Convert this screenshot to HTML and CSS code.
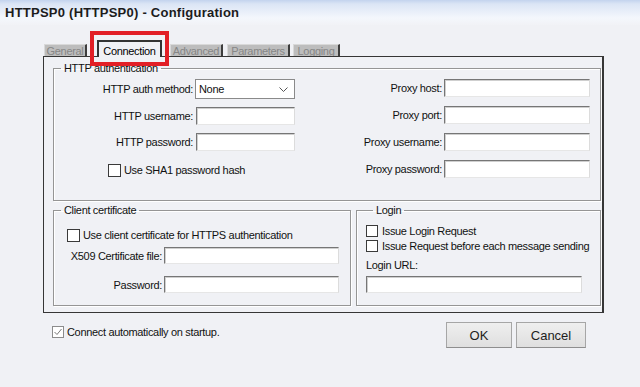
FILE: index.html
```html
<!DOCTYPE html>
<html>
<head>
<meta charset="utf-8">
<title>HTTPSP0 Configuration</title>
<link rel="stylesheet" href="styles.css">
</head>
<body>
<div class="titlebar">HTTPSP0 (HTTPSP0) - Configuration</div>

<div class="tabs">
  <div class="tabstrip">
    <div class="tab t-general">General</div>
    <div class="tab active">Connection<span class="highlight"></span></div>
    <div class="tab t-adv">Advanced</div>
    <div class="tab t-par">Parameters</div>
    <div class="tab t-log">Logging</div>
  </div>

  <div class="panel">
    <fieldset class="group http">
      <legend>HTTP authentication</legend>
      <div class="cols">
        <div class="form left">
          <label>HTTP auth method:</label>
          <div class="select"><span>None</span><svg width="9" height="5" viewBox="0 0 9 5"><polyline points="0.5,0.5 4.5,4.5 8.5,0.5" fill="none" stroke="#555" stroke-width="1"/></svg></div>
          <label>HTTP username:</label><div class="input"></div>
          <label>HTTP password:</label><div class="input"></div>
          <div class="check sha"><span class="box"></span>Use SHA1 password hash</div>
        </div>
        <div class="form right">
          <label>Proxy host:</label><div class="input"></div>
          <label>Proxy port:</label><div class="input"></div>
          <label>Proxy username:</label><div class="input"></div>
          <label>Proxy password:</label><div class="input"></div>
        </div>
      </div>
    </fieldset>

    <div class="row2">
      <fieldset class="group cert">
        <legend>Client certificate</legend>
        <div class="check"><span class="box"></span>Use client certificate for HTTPS authentication</div>
        <div class="form certform">
          <label>X509 Certificate file:</label><div class="input"></div>
          <label>Password:</label><div class="input"></div>
        </div>
      </fieldset>
      <fieldset class="group login">
        <legend>Login</legend>
        <div class="check"><span class="box"></span>Issue Login Request</div>
        <div class="check"><span class="box"></span>Issue Request before each message sending</div>
        <div class="urllabel">Login URL:</div>
        <div class="input url"></div>
      </fieldset>
    </div>
  </div>
</div>

<div class="bottom">
  <div class="check auto"><span class="box checked"><svg width="10" height="10" viewBox="0 0 10 10"><polyline points="1.5,5 4,7.5 8.5,2" fill="none" stroke="#7a7a7a" stroke-width="1"/></svg></span>Connect automatically on startup.</div>
  <div class="buttons">
    <button class="btn ok">OK</button>
    <button class="btn cancel">Cancel</button>
  </div>
</div>
</body>
</html>
```

FILE: styles.css
```css
html, body {
  margin: 0;
  padding: 0;
}
body {
  width: 640px;
  height: 387px;
  overflow: hidden;
  background: #f0f1f5;
  font-family: "Liberation Sans", Arial, sans-serif;
  font-size: 11px;
  letter-spacing: -0.33px;
  color: #111;
}

.titlebar {
  height: 25px;
  box-sizing: border-box;
  padding: 5px 0 0 5px;
  font-size: 13px;
  font-weight: bold;
  letter-spacing: 0.25px;
  line-height: 15px;
  color: #1c1c1c;
  background: linear-gradient(#c3d3ee 0px, #dbe5f5 4px, #f4f7fc 18px, #f1f2f6 25px);
}

/* ---- tabs ---- */
.tabs {
  margin: 15px 0 0 43px;
  width: 561px;
}
.tabstrip {
  display: flex;
  align-items: flex-end;
  height: 16px;
}
.tab {
  box-sizing: border-box;
  height: 12px;
  line-height: 13px;
  overflow: hidden;
  text-align: center;
  white-space: nowrap;
  background: #bdbdbd;
  color: #868686;
  border-top: 1px solid #d9d9d9;
  border-left: 1px solid #d9d9d9;
  border-right: 2px solid #3d3d3d;
}
.t-general { margin-left: 1px; width: 43px; }
.t-adv { margin-left: 8px; width: 53px; }
.t-par { margin-left: 4px; width: 63px; }
.t-log { margin-left: 3px; width: 47px; }
.tab.active {
  position: relative;
  z-index: 1;
  overflow: visible;
  margin-left: 10px;
  width: 65px;
  height: 17px;
  margin-bottom: -1px;
  padding-top: 3px;
  line-height: 12px;
  background: #f0f1f5;
  color: #000;
  border-top: 2px solid #333;
  border-left: 2px solid #333;
  border-right: 2px solid #333;
}
.highlight {
  position: absolute;
  left: -9px;
  top: -11px;
  width: 79px;
  height: 35px;
  box-sizing: border-box;
  border: 4px solid #e21f26;
  pointer-events: none;
}

.panel {
  box-sizing: border-box;
  height: 257px;
  border: 1px solid #363636;
  border-right-width: 2px;
  padding: 5px 1px 0 9px;
}

/* ---- group boxes ---- */
fieldset.group {
  margin: 0;
  min-width: 0;
  box-sizing: border-box;
  border: 1px solid #959595;
  box-shadow: inset 1px 1px 0 #fff, 1px 1px 0 #fff;
  padding: 5px 0 0 0;
}
fieldset.group legend {
  padding: 0 3px;
  margin-left: 7px;
  line-height: 12px;
  font-size: 11px;
}
.http {
  width: 548px;
  height: 139px;
}
.cols {
  display: flex;
  align-items: flex-start;
}
.form {
  display: grid;
  align-items: center;
  column-gap: 2px;
}
.form label {
  text-align: right;
  white-space: nowrap;
}
.left {
  grid-template-columns: 139px 100px;
  row-gap: 8px;
}
.left .input {
  margin-left: 1px;
  width: 99px;
}
.right {
  margin-left: auto;
  margin-right: 10px;
  grid-template-columns: 100px 146px;
  row-gap: 9px;
}

.input {
  box-sizing: border-box;
  height: 18px;
  background: #fff;
  border-top: 1px solid #767676;
  border-left: 1px solid #767676;
  border-right: 1px solid #dcdcdc;
  border-bottom: 1px solid #e6e6e6;
  box-shadow: inset 1px 1px 0 #cfcfcf;
}
.select {
  box-sizing: border-box;
  height: 20px;
  width: 100px;
  background: #fff;
  border: 1px solid #8a8a8a;
  display: flex;
  align-items: center;
  justify-content: space-between;
  padding: 0 6px 0 3px;
  font-size: 11px;
}

/* ---- checkboxes ---- */
.check {
  display: flex;
  align-items: center;
  white-space: nowrap;
}
.box {
  box-sizing: border-box;
  width: 13px;
  height: 13px;
  margin-right: 3px;
  background: #fff;
  border: 1px solid #3a3a3a;
  flex: none;
  display: flex;
  align-items: center;
  justify-content: center;
}
.check.sha {
  grid-column: 1 / -1;
  padding-left: 54px;
  margin-top: 4px;
  height: 14px;
}

/* ---- second row ---- */
.row2 {
  display: flex;
  gap: 5px;
  margin-top: 3px;
}
.cert {
  width: 298px;
  height: 102px;
  padding: 11px 0 0 0 !important;
}
.cert .check {
  padding-left: 13px;
  height: 16px;
}
.certform {
  margin-top: 4px;
  grid-template-columns: 108px 175px;
  row-gap: 12px;
}
.certform .input {
  height: 17px;
}

.login {
  width: 245px;
  height: 102px;
  padding: 7px 0 0 9px !important;
}
.login .check {
  height: 15px;
}
.login .box {
  width: 12px;
  height: 12px;
  margin-right: 4px;
}
.urllabel {
  margin-top: 5px;
  line-height: 15px;
}
.input.url {
  margin-top: 3px;
  width: 216px;
  height: 17px;
}

/* ---- bottom ---- */
.bottom {
  display: flex;
  align-items: flex-start;
  padding: 9px 54px 0 52px;
}
.check.auto {
  margin-top: 3px;
  line-height: 14px;
}
.box.checked {
  width: 12px;
  height: 12px;
  border-color: #8c8c8c;
}
.buttons {
  margin-left: auto;
  display: flex;
  gap: 4px;
}
.btn {
  box-sizing: border-box;
  height: 26px;
  padding: 0;
  font-family: "Liberation Sans", Arial, sans-serif;
  font-size: 13px;
  letter-spacing: 0;
  color: #1e1e1e;
  background: linear-gradient(#efefef, #dfdfdf);
  border: 1px solid #a6a6a6;
  border-bottom-color: #8e8e8e;
  border-radius: 0;
}
.btn.ok { width: 66px; }
.btn.cancel { width: 70px; }
```
